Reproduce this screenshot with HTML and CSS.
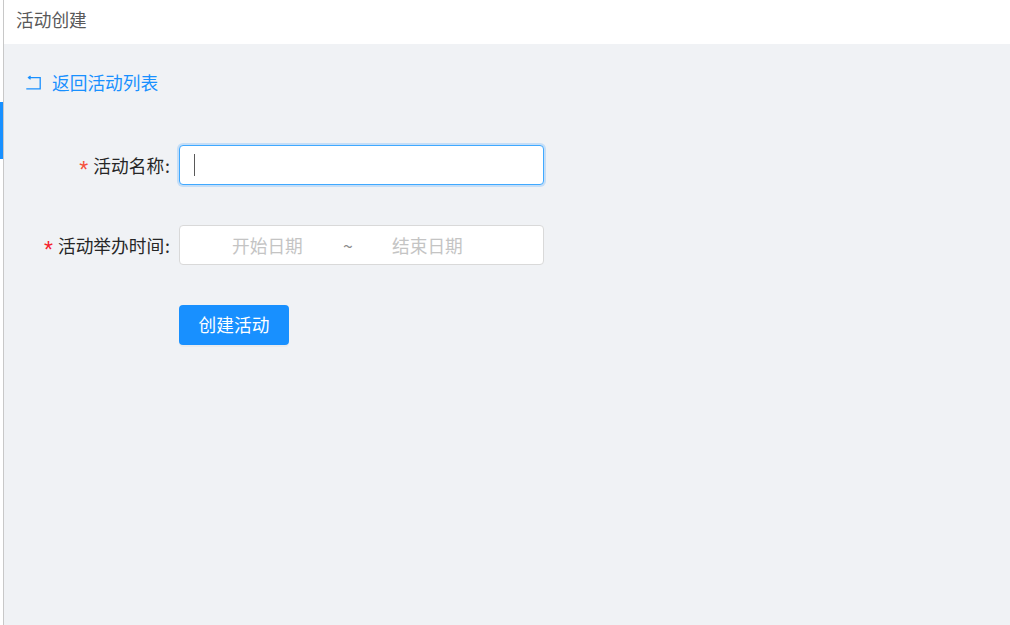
FILE: index.html
```html
<!DOCTYPE html>
<html lang="zh-CN">
<head>
<meta charset="utf-8">
<title>活动创建</title>
<link rel="stylesheet" href="styles.css">
</head>
<body>
<div class="app">
  <aside class="rail"><div class="rail-active"></div></aside>
  <main class="main">
    <header class="topbar">活动创建</header>
    <section class="content">
      <a class="back" href="#">
        <svg class="back-icon" width="16" height="16" viewBox="0 0 16 16" fill="none" stroke="#1890ff" stroke-width="1.3">
          <path d="M2.5 2.6H14.2V13.9H0.3"/>
          <path d="M4.6 .9 2.5 2.6 4.6 4.3"/>
        </svg>
        <span class="back-text">返回活动列表</span>
      </a>
      <form class="form">
        <div class="row">
          <label class="label"><span class="req red">*</span><span>活动名称</span><span class="colon">:</span></label>
          <div class="input focused"><span class="caret"></span></div>
        </div>
        <div class="row">
          <label class="label"><span class="req pink">*</span><span>活动举办时间</span><span class="colon">:</span></label>
          <div class="input range">
            <span class="ph">开始日期</span>
            <span class="sep">~</span>
            <span class="ph">结束日期</span>
          </div>
        </div>
        <div class="row">
          <div class="label"></div>
          <button class="btn" type="button">创建活动</button>
        </div>
      </form>
    </section>
  </main>
</div>
</body>
</html>
```

FILE: styles.css
```css
* { box-sizing: border-box; }
html, body { margin: 0; height: 100%; overflow: hidden; }
body {
  font-family: "Noto Sans CJK SC", "Noto Sans", sans-serif;
  font-size: 17.7px;
  background: #fff;
}
.app { display: flex; height: 625px; }
.rail {
  width: 4px;
  flex: none;
  background: #fff;
  border-right: 1px solid #c8c8c8;
  padding-top: 102px;
}
.rail-active { width: 3px; height: 57px; background: #1890ff; }
.main { flex: 1; display: flex; flex-direction: column; min-width: 0; }
.topbar {
  height: 44px;
  flex: none;
  background: #fff;
  padding-left: 12px;
  line-height: 39px;
  color: #595959;
}
.content { flex: 1; background: #f0f2f5; padding: 27px 0 0 22px; }
.back {
  display: flex;
  align-items: center;
  height: 24px;
  color: #1890ff;
  text-decoration: none;
  gap: 10px;
  line-height: 24px;
}
.back-text { margin-bottom: 2px; }
.form { margin-top: 50px; display: flex; flex-direction: column; gap: 40px; }
.row { display: flex; align-items: center; height: 40px; }
.label {
  display: flex;
  justify-content: flex-end;
  align-items: center;
  width: 144px;
  margin-right: 9px;
  flex: none;
  color: #262626;
  white-space: nowrap;
}
.req {
  margin: 10px 5px 0 0;
  font-family: "Liberation Sans", sans-serif;
  font-size: 23px;
  line-height: 1;
}
.red { color: #f5503c; }
.pink { color: #f5222d; }
.colon { margin-left: 1px; }
.input {
  width: 365px;
  height: 40px;
  background: #fff;
  border: 1px solid #d9d9d9;
  border-radius: 4px;
}
.focused {
  border-color: #40a9ff;
  box-shadow: 0 0 0 2px rgba(24, 144, 255, .2);
  display: flex;
  align-items: center;
  padding-left: 14px;
}
.caret { width: 1px; height: 22px; background: #595959; }
.range { display: flex; align-items: center; padding-left: 52px; }
.ph { width: 71px; color: #c4c4c4; white-space: nowrap; line-height: 38px; }
.sep { width: 89px; padding-left: 40px; color: #8c8c8c; }
.btn {
  width: 110px;
  height: 40px;
  border: 0;
  border-radius: 4px;
  background: #1890ff;
  color: #fff;
  font: inherit;
  padding: 0 0 2px;
  box-shadow: 0 2px 0 rgba(0, 0, 0, .03);
}
```
